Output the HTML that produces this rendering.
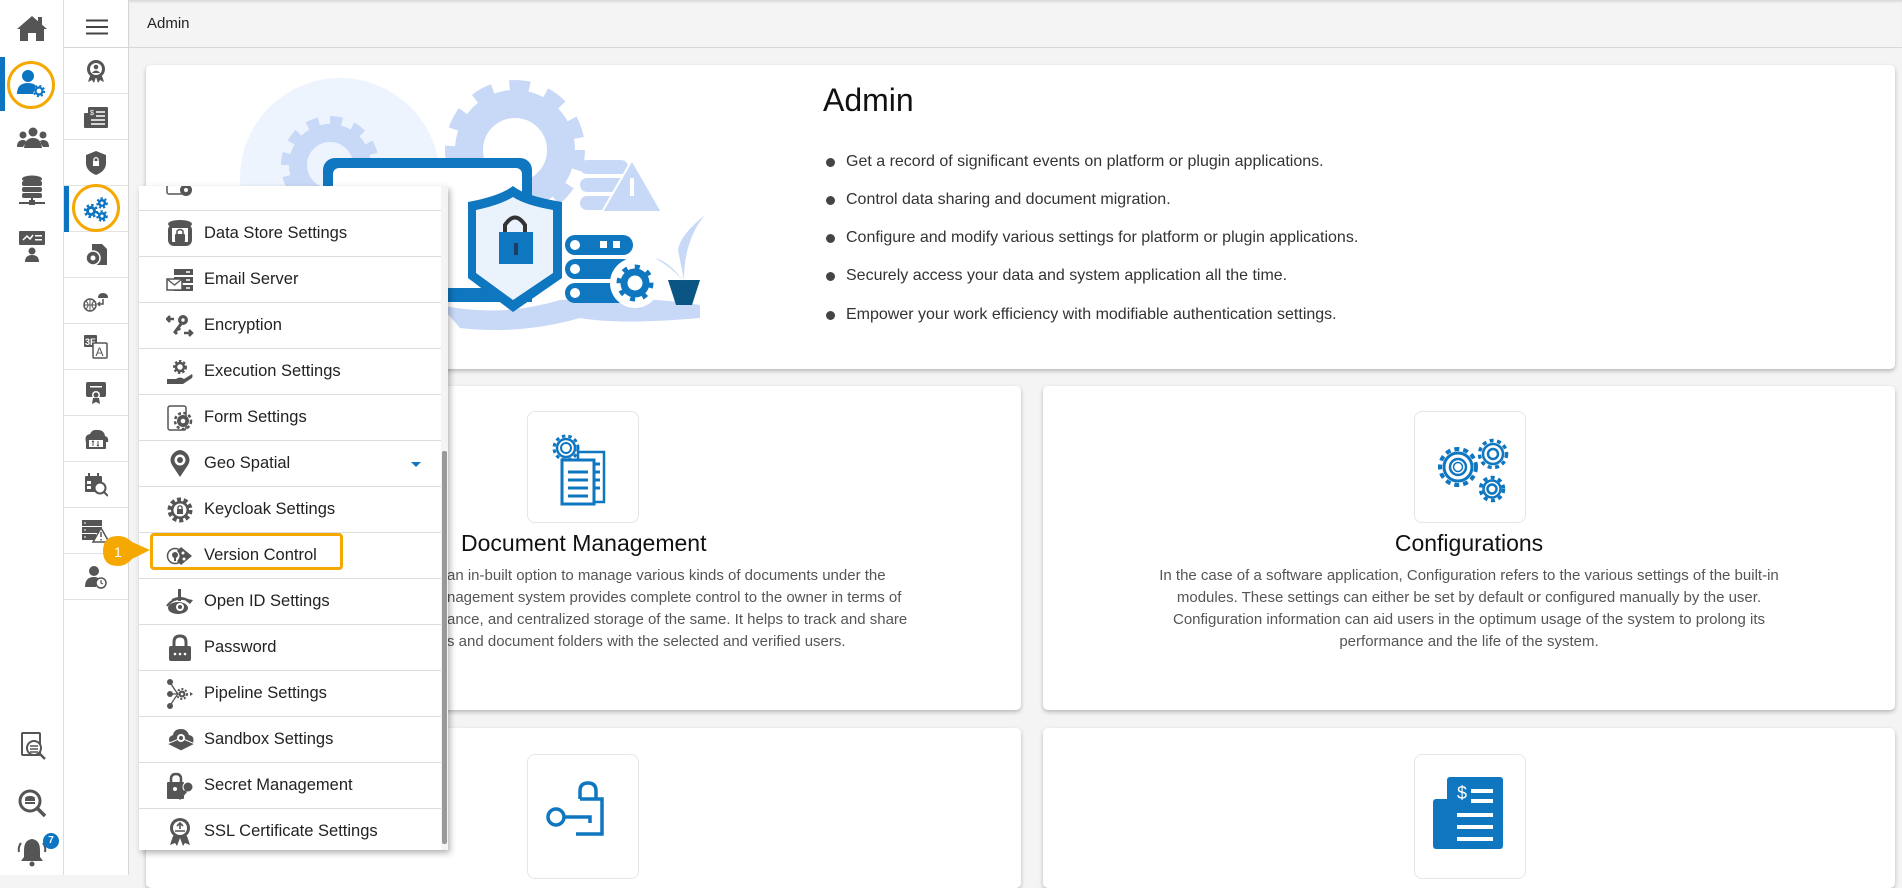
<!DOCTYPE html>
<html><head><meta charset="utf-8"><style>
*{box-sizing:border-box;margin:0;padding:0}
body{width:1902px;height:875px;overflow:hidden;background:#f4f4f4;font-family:"Liberation Sans",sans-serif;position:relative;color:#222}
.abs{position:absolute}
.sb1{left:0;top:0;width:64px;height:875px;background:#fff;border-right:1px solid #ddd}
.sb2{left:64px;top:0;width:65px;height:875px;background:#fff;border-right:1px solid #d6d6d6}
.hdr{left:129px;top:0;width:1773px;height:48px;background:#f4f4f4;border-bottom:1px solid #d8d8d8;box-shadow:0 3px 3px -2px #ccc inset}
.card{background:#fff;border-radius:5px;box-shadow:0 2px 4px rgba(0,0,0,.25)}
.s2i{position:absolute;left:64px;width:64px;height:46px;border-bottom:1px solid #e2e2e2;display:flex;align-items:center;justify-content:center}
.menu{left:139px;top:186px;width:309px;height:664px;background:#fff;box-shadow:2px 3px 6px rgba(0,0,0,.3);overflow:hidden}
.mi{position:absolute;left:0;width:302px;height:46px;border-bottom:1px solid #ddd;display:flex;align-items:center;font-size:16.5px;color:#222}
.mi svg{position:absolute;left:27px}
.mi span{position:absolute;left:65px}
.bul{position:absolute;left:826px;font-size:16px;color:#333}
.bul:before{content:"";position:absolute;left:0;top:5px;width:9px;height:9px;border-radius:50%;background:#444}
.bul span{margin-left:20px}
.ibox{position:absolute;width:112px;height:112px;border:1px solid #e6e6e6;border-radius:8px;background:#fff}
.desc{position:absolute;font-size:15px;color:#555;line-height:22px;text-align:center}
</style></head><body>
<div class="abs sb1"></div>
<div class="abs" style="left:0;top:57px;width:5px;height:54px;background:#0c74c0"></div>
<svg class="abs" style="left:16px;top:14px" width="32" height="28" viewBox="0 0 32 28"><path d="M16 2 L1 15 L4 15 L4 27 L12 27 L12 19 L20 19 L20 27 L28 27 L28 15 L31 15 Z" fill="#555"/><rect x="22" y="3" width="4" height="8" fill="#555"/></svg>
<div class="abs" style="left:7px;top:61px;width:48px;height:48px;border:3px solid #f5a800;border-radius:50%"></div>
<svg class="abs" style="left:16px;top:68px" width="30" height="30" viewBox="0 0 30 30"><circle cx="12" cy="8" r="6" fill="#0c74c0"/><path d="M1 26 Q1 15 12 15 Q18 15 20 18 L17 26 Z" fill="#0c74c0"/><circle cx="23" cy="23" r="3.5" fill="none" stroke="#0c74c0" stroke-width="2.2"/><circle cx="23" cy="23" r="5.3" fill="none" stroke="#0c74c0" stroke-width="1.8" stroke-dasharray="2 2.2"/></svg>
<svg class="abs" style="left:17px;top:127px" width="32" height="22" viewBox="0 0 32 22"><circle cx="16" cy="5" r="4.5" fill="#555"/><circle cx="6" cy="8" r="3.5" fill="#555"/><circle cx="26" cy="8" r="3.5" fill="#555"/><path d="M7 21 Q8 11 16 11 Q24 11 25 21Z M0 20 Q0 13 6 13 Q9 13 9 15 L6 20Z M32 20 Q32 13 26 13 Q23 13 23 15 L26 20Z" fill="#555"/></svg>
<svg class="abs" style="left:18px;top:175px" width="28" height="32" viewBox="0 0 28 32"><ellipse cx="14" cy="4" rx="10" ry="3.5" fill="#555"/><rect x="4" y="6" width="20" height="5" rx="2" fill="#555"/><rect x="4" y="12" width="20" height="5" rx="2" fill="#555"/><rect x="4" y="18" width="20" height="5" rx="2" fill="#555"/><rect x="13" y="23" width="2" height="5" fill="#555"/><rect x="1" y="27" width="26" height="2" fill="#555"/><rect x="11" y="25" width="6" height="5" fill="#555"/></svg>
<svg class="abs" style="left:19px;top:230px" width="26" height="32" viewBox="0 0 26 32"><rect x="0" y="1" width="26" height="14" rx="1" fill="#555"/><path d="M4 10 L8 6 L11 9 L14 5" stroke="#fff" stroke-width="1.5" fill="none"/><rect x="16" y="5" width="7" height="1.5" fill="#fff"/><rect x="16" y="9" width="7" height="1.5" fill="#fff"/><circle cx="13" cy="21" r="3.5" fill="#555"/><path d="M6 32 Q6 25 13 25 Q20 25 20 32Z" fill="#555"/></svg>
<svg class="abs" style="left:19px;top:732px" width="28" height="28" viewBox="0 0 28 28"><rect x="3" y="1" width="18" height="22" rx="1" fill="none" stroke="#555" stroke-width="2"/><circle cx="15" cy="16" r="7" fill="#fff" stroke="#555" stroke-width="2"/><path d="M11 14h8M11 17h8M11 20h8" stroke="#555" stroke-width="1.5"/><path d="M20 21 L26 27" stroke="#555" stroke-width="2.5"/></svg>
<svg class="abs" style="left:17px;top:788px" width="30" height="30" viewBox="0 0 30 30"><circle cx="13" cy="13" r="10" fill="none" stroke="#555" stroke-width="3"/><path d="M20 20 L28 28" stroke="#555" stroke-width="3.5"/><ellipse cx="13" cy="10" rx="5" ry="2" fill="#555"/><rect x="8" y="11" width="10" height="2" fill="#555"/><rect x="8" y="14" width="10" height="2" fill="#555"/></svg>
<svg class="abs" style="left:17px;top:837px" width="30" height="30" viewBox="0 0 30 30"><path d="M15 2 Q7 3 7 13 L7 20 L4 24 L26 24 L23 20 L23 13 Q23 3 15 2Z" fill="#555"/><circle cx="15" cy="27" r="2.5" fill="#555"/><path d="M4 6 Q1 10 2 15 M26 6 Q29 10 28 15" stroke="#555" stroke-width="2" fill="none"/></svg>
<div class="abs" style="left:43px;top:833px;width:16px;height:16px;border-radius:50%;background:#0c74c0;color:#fff;font-size:10px;font-weight:bold;text-align:center;line-height:16px">7</div>

<div class="abs sb2"></div>
<svg class="abs" style="left:86px;top:19px" width="22" height="16" viewBox="0 0 22 16"><path d="M0 1.5h22M0 8h22M0 14.5h22" stroke="#444" stroke-width="2"/></svg>
<div class="abs" style="left:64px;top:47px;width:64px;height:1px;background:#d6d6d6"></div>
<div class="s2i" style="top:48px"><svg width="22" height="24" viewBox="0 0 22 24"><circle cx="11" cy="10" r="9" fill="#555"/><circle cx="11" cy="10" r="6" fill="#fff"/><circle cx="11" cy="8" r="2.3" fill="#555"/><path d="M7 14 Q11 9 15 14Z" fill="#555"/><path d="M5 17 L3 23 L7 21 L9 24 L11 18Z M17 17 L19 23 L15 21 L13 24 L11 18Z" fill="#555"/></svg></div>
<div class="s2i" style="top:94px"><svg width="24" height="22" viewBox="0 0 24 22"><rect x="0" y="7" width="8" height="15" rx="1" fill="#555"/><rect x="4" y="1" width="20" height="21" rx="1" fill="#555"/><text x="6" y="9" font-size="7" fill="#fff" font-family="Liberation Sans">$</text><path d="M12 6h9M12 10h9M7 14h14M7 18h14" stroke="#fff" stroke-width="1.5"/></svg></div>
<div class="s2i" style="top:140px"><svg width="20" height="24" viewBox="0 0 20 24"><path d="M10 0 L20 4 L20 12 Q20 20 10 24 Q0 20 0 12 L0 4Z" fill="#555"/><rect x="7" y="10" width="6" height="5" fill="#fff"/><path d="M8 10 V8 Q10 5 12 8 V10" stroke="#fff" stroke-width="1.3" fill="none"/></svg></div>
<div class="s2i" style="top:186px"><svg width="26" height="26" viewBox="0 0 26 26"><circle cx="8" cy="15" r="3.5" fill="none" stroke="#0c74c0" stroke-width="3"/><circle cx="8" cy="15" r="6" fill="none" stroke="#0c74c0" stroke-width="2.2" stroke-dasharray="2.5 2.2"/><circle cx="19" cy="7" r="2.8" fill="none" stroke="#0c74c0" stroke-width="2.5"/><circle cx="19" cy="7" r="4.8" fill="none" stroke="#0c74c0" stroke-width="2" stroke-dasharray="2.2 2"/><circle cx="19" cy="20" r="2.8" fill="none" stroke="#0c74c0" stroke-width="2.5"/><circle cx="19" cy="20" r="4.8" fill="none" stroke="#0c74c0" stroke-width="2" stroke-dasharray="2.2 2"/></svg></div>
<div class="abs" style="left:64px;top:186px;width:5px;height:46px;background:#0c74c0"></div>
<div class="abs" style="left:72px;top:184px;width:48px;height:48px;border:3px solid #f5a800;border-radius:50%"></div>
<div class="s2i" style="top:232px"><svg width="24" height="24" viewBox="0 0 24 24"><path d="M8 1 H18 L23 6 V22 H8Z" fill="#555"/><circle cx="9" cy="15" r="7" fill="#555" stroke="#fff" stroke-width="1.5"/><circle cx="9" cy="15" r="2.5" fill="#fff"/></svg></div>
<div class="s2i" style="top:278px"><svg width="26" height="22" viewBox="0 0 26 22"><circle cx="7" cy="15" r="6" fill="none" stroke="#555" stroke-width="1.5"/><path d="M1 15h12M7 9v12M3 11 Q7 15 3 19M11 11 Q7 15 11 19" stroke="#555" stroke-width="1" fill="none"/><path d="M15 8 Q15 3 20 3 Q25 3 25 8Z" fill="#555"/><path d="M20 9 V14 H15 M17 12 L15 14 L17 16" stroke="#555" stroke-width="1.5" fill="none"/></svg></div>
<div class="s2i" style="top:324px"><svg width="26" height="26" viewBox="0 0 26 26"><rect x="1" y="1" width="13" height="12" rx="1" fill="#555"/><text x="2" y="11" font-size="9" fill="#fff" font-family="Liberation Sans" font-weight="bold">3F</text><rect x="10" y="9" width="14" height="15" rx="1" fill="#fff" stroke="#555" stroke-width="1.5"/><text x="12.5" y="22" font-size="12" fill="#555" font-family="Liberation Sans">A</text></svg></div>
<div class="s2i" style="top:370px"><svg width="22" height="24" viewBox="0 0 22 24"><rect x="1" y="1" width="20" height="15" rx="2" fill="#555"/><rect x="5" y="5" width="12" height="1.5" fill="#fff"/><circle cx="11" cy="14" r="4" fill="#fff"/><circle cx="11" cy="14" r="2.5" fill="#555"/><path d="M8 17 L7 23 L11 21 L15 23 L14 17" fill="#555"/></svg></div>
<div class="s2i" style="top:416px"><svg width="26" height="22" viewBox="0 0 26 22"><path d="M3 14 Q1 7 7 6 Q9 1 15 2 Q21 2 22 8 Q26 9 25 14Z" fill="#555"/><rect x="3" y="12" width="20" height="9" rx="1" fill="#555"/><rect x="6" y="12" width="14" height="7" fill="#fff"/><path d="M10 18v-5M9 14l1-1 1 1M15 13v5M14 17l1 1 1-1" stroke="#555" stroke-width="1"/></svg></div>
<div class="s2i" style="top:462px"><svg width="24" height="24" viewBox="0 0 24 24"><rect x="1" y="3" width="17" height="16" rx="1" fill="#555"/><rect x="4" y="0" width="2" height="5" fill="#555"/><rect x="13" y="0" width="2" height="5" fill="#555"/><rect x="3" y="8" width="4" height="3" fill="#fff"/><rect x="3" y="13" width="4" height="3" fill="#fff"/><circle cx="16" cy="15" r="5.5" fill="#fff" stroke="#555" stroke-width="2"/><path d="M20 19 L24 23" stroke="#555" stroke-width="2"/></svg></div>
<div class="s2i" style="top:508px"><svg width="28" height="24" viewBox="0 0 28 24"><rect x="0" y="1" width="20" height="6" fill="#555"/><rect x="0" y="8" width="20" height="6" fill="#555"/><rect x="0" y="15" width="14" height="6" fill="#555"/><path d="M2 4h2M2 11h2M2 18h2" stroke="#fff"/><path d="M19 9 L27 23 L11 23Z" fill="#fff" stroke="#555" stroke-width="1.5"/><path d="M19 13v5M19 20v1.5" stroke="#555" stroke-width="1.5"/></svg></div>
<div class="s2i" style="top:554px"><svg width="24" height="24" viewBox="0 0 24 24"><circle cx="10" cy="6" r="5" fill="#555"/><path d="M1 22 Q1 12 10 12 Q14 12 15 14 L12 22Z" fill="#555"/><circle cx="17" cy="18" r="5" fill="#fff" stroke="#555" stroke-width="1.5"/><path d="M17 15v3l2 1" stroke="#555" stroke-width="1.2" fill="none"/></svg></div>

<div class="abs hdr"></div>
<div class="abs" style="left:147px;top:15px;font-size:15px;color:#222">Admin</div>

<div class="abs card" style="left:146px;top:65px;width:1749px;height:304px"></div>
<svg class="abs" style="left:230px;top:75px" width="480" height="270" viewBox="230 75 480 270">
<circle cx="340" cy="178" r="100" fill="#eef4fe"/>
<circle cx="330" cy="165" r="32" fill="none" stroke="#c8d9f7" stroke-width="18"/>
<circle cx="330" cy="165" r="44" fill="none" stroke="#c8d9f7" stroke-width="10" stroke-dasharray="12 11"/>
<circle cx="515" cy="150" r="46" fill="none" stroke="#c8d9f7" stroke-width="28"/>
<circle cx="515" cy="150" r="64" fill="none" stroke="#c8d9f7" stroke-width="12" stroke-dasharray="20 17"/>
<path d="M440 305 Q500 318 560 300 Q640 295 700 305 L700 318 Q620 325 580 318 Q520 335 460 328Z" fill="#c8d9f7"/>
<rect x="580" y="160" width="48" height="14" rx="7" fill="#c8d9f7"/><rect x="580" y="178" width="48" height="14" rx="7" fill="#c8d9f7"/><rect x="580" y="196" width="48" height="14" rx="7" fill="#c8d9f7"/>
<path d="M632 160 L662 212 L602 212Z" fill="#c8d9f7" stroke="#fff" stroke-width="2"/><rect x="630" y="178" width="4" height="18" fill="#fff"/>
<rect x="323" y="158" width="209" height="142" rx="12" fill="#0f76c0"/>
<rect x="333" y="168" width="189" height="120" rx="6" fill="#fff"/>
<rect x="323" y="290" width="209" height="12" fill="#0f76c0"/>
<path d="M513 186 Q525 196 562 202 V278 L513 312 L468 278 V202 Q500 196 513 186Z" fill="#0f76c0"/>
<path d="M513 197 Q525 205 553 210 V273 L513 300 L476 273 V210 Q500 205 513 197Z" fill="#eaf3fc"/>
<path d="M505 233 V225 Q515 210 525 225 V233" stroke="#333" stroke-width="4" fill="none"/>
<rect x="499" y="232" width="34" height="32" fill="#0f76c0"/><rect x="514" y="243" width="4" height="12" fill="#1d3d66"/>
<rect x="565" y="235" width="68" height="20" rx="10" fill="#0f76c0"/><rect x="565" y="259" width="68" height="20" rx="10" fill="#0f76c0"/><rect x="565" y="283" width="68" height="20" rx="10" fill="#0f76c0"/>
<circle cx="575" cy="245" r="5" fill="#fff"/><circle cx="575" cy="269" r="5" fill="#fff"/><circle cx="575" cy="293" r="5" fill="#fff"/>
<rect x="600" y="241" width="7" height="7" fill="#fff"/><rect x="613" y="241" width="7" height="7" fill="#fff"/>
<circle cx="635" cy="283" r="25" fill="#fff"/>
<circle cx="635" cy="283" r="11" fill="none" stroke="#0f76c0" stroke-width="7"/>
<circle cx="635" cy="283" r="16" fill="none" stroke="#0f76c0" stroke-width="5" stroke-dasharray="5 7.5"/>
<path d="M668 280 H700 L692 305 H676Z" fill="#0b5585"/>
<path d="M684 280 Q684 240 705 215 Q680 235 678 250Z" fill="#c8d9f7"/>
<path d="M684 282 Q670 262 655 258 Q675 270 684 282Z" fill="#c8d9f7"/>
</svg>
<div class="abs" style="left:823px;top:82px;font-size:32px;color:#111">Admin</div>
<div class="bul" style="top:153px"><span>Get a record of significant events on platform or plugin applications.</span></div>
<div class="bul" style="top:191px"><span>Control data sharing and document migration.</span></div>
<div class="bul" style="top:229px"><span>Configure and modify various settings for platform or plugin applications.</span></div>
<div class="bul" style="top:267px"><span>Securely access your data and system application all the time.</span></div>
<div class="bul" style="top:306px"><span>Empower your work efficiency with modifiable authentication settings.</span></div>

<div class="abs card" style="left:146px;top:386px;width:875px;height:324px"></div>
<div class="abs card" style="left:1043px;top:386px;width:852px;height:324px"></div>
<div class="abs card" style="left:146px;top:728px;width:875px;height:160px"></div>
<div class="abs card" style="left:1043px;top:728px;width:852px;height:160px"></div>

<div class="ibox" style="left:527px;top:411px"><svg style="position:absolute;left:20px;top:18px" width="72" height="76" viewBox="0 0 72 76"><circle cx="18" cy="18" r="9" fill="none" stroke="#0f76c0" stroke-width="2.5"/><circle cx="18" cy="18" r="12" fill="none" stroke="#0f76c0" stroke-width="3" stroke-dasharray="3.5 3"/><circle cx="18" cy="18" r="5" fill="none" stroke="#0f76c0" stroke-width="2"/><rect x="30" y="22" width="26" height="50" fill="#fff" stroke="#0f76c0" stroke-width="2.5"/><rect x="14" y="30" width="32" height="44" fill="#fff" stroke="#0f76c0" stroke-width="3"/><path d="M20 42h20M20 50h20M20 58h20M20 66h20M46 34h6M46 42h6M46 50h6M46 58h6" stroke="#0f76c0" stroke-width="3"/></svg></div>
<div class="abs" style="left:461px;top:530px;font-size:23px;color:#111">Document Management</div>
<div class="desc" style="left:440px;top:565px;width:510px;text-align:left;padding-left:7px">an in-built option to manage various kinds of documents under the<br>nagement system provides complete control to the owner in terms of<br>ance, and centralized storage of the same. It helps to track and share<br>s and document folders with the selected and verified users.</div>

<div class="ibox" style="left:1414px;top:411px"><svg style="position:absolute;left:10px;top:18px" width="90" height="76" viewBox="0 0 90 76"><circle cx="33" cy="37" r="14" fill="none" stroke="#0f76c0" stroke-width="3"/><circle cx="33" cy="37" r="18" fill="none" stroke="#0f76c0" stroke-width="4" stroke-dasharray="5 4"/><circle cx="33" cy="37" r="8" fill="none" stroke="#0f76c0" stroke-width="2.5"/><circle cx="33" cy="37" r="4.5" fill="none" stroke="#0f76c0" stroke-width="1.5"/><circle cx="68" cy="24" r="10" fill="none" stroke="#0f76c0" stroke-width="2.5"/><circle cx="68" cy="24" r="13.5" fill="none" stroke="#0f76c0" stroke-width="3.5" stroke-dasharray="4 3.5"/><circle cx="68" cy="24" r="5" fill="none" stroke="#0f76c0" stroke-width="2.5"/><circle cx="67" cy="59" r="8.5" fill="none" stroke="#0f76c0" stroke-width="2.5"/><circle cx="67" cy="59" r="11.5" fill="none" stroke="#0f76c0" stroke-width="3.5" stroke-dasharray="4 3.5"/><circle cx="67" cy="59" r="4.5" fill="none" stroke="#0f76c0" stroke-width="2.5"/></svg></div>
<div class="abs" style="left:1043px;top:530px;width:852px;text-align:center;font-size:23px;color:#111">Configurations</div>
<div class="desc" style="left:1133px;top:565px;width:672px">In the case of a software application, Configuration refers to the various settings of the built-in<br>modules. These settings can either be set by default or configured manually by the user.<br>Configuration information can aid users in the optimum usage of the system to prolong its<br>performance and the life of the system.</div>

<div class="ibox" style="left:527px;top:754px;height:125px"><svg style="position:absolute;left:14px;top:26px" width="70" height="56" viewBox="0 0 70 56"><path d="M38 18 V10 Q38 2 46 2 Q54 2 54 10 V18" fill="none" stroke="#0f76c0" stroke-width="3.5"/><path d="M38 18 H60 V53 H34" fill="none" stroke="#0f76c0" stroke-width="3.5"/><circle cx="14" cy="36" r="8" fill="none" stroke="#0f76c0" stroke-width="3.5"/><path d="M22 36 H48 V42" stroke="#0f76c0" stroke-width="3.5" fill="none"/></svg></div>
<div class="ibox" style="left:1414px;top:754px;height:125px"><svg style="position:absolute;left:18px;top:22px" width="76" height="72" viewBox="0 0 76 72"><rect x="0" y="22" width="28" height="50" rx="3" fill="#0f76c0"/><rect x="14" y="0" width="56" height="72" rx="3" fill="#0f76c0"/><text x="24" y="22" font-size="18" fill="#fff" font-family="Liberation Sans">$</text><path d="M38 14h22M38 24h22M24 38h36M24 50h36M24 62h36" stroke="#fff" stroke-width="4"/></svg></div>

<div class="abs menu">
<div class="mi" style="top:-21px"><svg width="28" height="20" viewBox="0 0 28 20"><rect x="1" y="2" width="16" height="14" rx="2" fill="none" stroke="#555" stroke-width="1.5"/><circle cx="20" cy="12" r="6" fill="#555"/><circle cx="20" cy="12" r="2" fill="#fff"/></svg></div>
<div class="mi" style="top:25px"><svg width="28" height="30" viewBox="0 0 28 30"><ellipse cx="14" cy="5" rx="12" ry="4" fill="#555"/><rect x="2" y="5" width="24" height="22" rx="6" fill="#555"/><rect x="6" y="9" width="16" height="14" fill="#fff"/><rect x="9" y="15" width="10" height="8" rx="1" fill="#555"/><path d="M11 15 V12 Q14 9 17 12 V15" stroke="#555" stroke-width="1.5" fill="none"/></svg><span>Data Store Settings</span></div>
<div class="mi" style="top:71px"><svg width="28" height="22" viewBox="0 0 28 22"><rect x="8" y="0" width="19" height="6" fill="#555"/><rect x="8" y="8" width="19" height="6" fill="#555"/><rect x="8" y="16" width="19" height="6" fill="#555"/><rect x="1" y="10" width="15" height="11" fill="#fff" stroke="#555" stroke-width="1.5"/><path d="M1 10 L8.5 16 L16 10" stroke="#555" stroke-width="1.3" fill="none"/><path d="M20 3h4M20 11h4M20 19h4" stroke="#fff" stroke-width="1.5"/></svg><span>Email Server</span></div>
<div class="mi" style="top:117px"><svg width="28" height="24" viewBox="0 0 28 24"><circle cx="17" cy="6" r="5" fill="#555"/><circle cx="17" cy="6" r="1.7" fill="#fff"/><path d="M15 10 L9 18 L11 20 M12 14 L14 16" stroke="#555" stroke-width="3" fill="none"/><path d="M1 5 H8 M4 2 L1 5 L4 8" stroke="#555" stroke-width="2.5" fill="none"/><path d="M18 19 H26 M23 16 L26 19 L23 22" stroke="#555" stroke-width="2.5" fill="none"/></svg><span>Encryption</span></div>
<div class="mi" style="top:163px"><svg width="28" height="26" viewBox="0 0 28 26"><circle cx="14" cy="8" r="4" fill="none" stroke="#555" stroke-width="2.5"/><circle cx="14" cy="8" r="6" fill="none" stroke="#555" stroke-width="2" stroke-dasharray="2.5 2"/><path d="M1 20 H10 Q14 17 18 20 L26 15 Q27 17 26 19 L17 25 H1Z" fill="#555"/></svg><span>Execution Settings</span></div>
<div class="mi" style="top:209px"><svg width="28" height="26" viewBox="0 0 28 26"><rect x="2" y="1" width="18" height="24" rx="2" fill="none" stroke="#555" stroke-width="1.5"/><circle cx="17" cy="16" r="6" fill="#555"/><circle cx="17" cy="16" r="8" fill="none" stroke="#555" stroke-width="2.5" stroke-dasharray="3 2.4"/><circle cx="17" cy="16" r="2.3" fill="#fff"/></svg><span>Form Settings</span></div>
<div class="mi" style="top:255px"><svg width="28" height="28" viewBox="0 0 28 28"><path d="M14 27 L6 15 Q3 10 6 5 Q10 0 14 0 Q18 0 22 5 Q25 10 22 15Z" fill="#555"/><circle cx="14" cy="10" r="5.5" fill="#fff"/><circle cx="14" cy="10" r="3" fill="#555"/></svg><span>Geo Spatial</span><div style="position:absolute;left:272px;top:21px;border-left:5px solid transparent;border-right:5px solid transparent;border-top:5px solid #0f76c0"></div></div>
<div class="mi" style="top:301px"><svg width="28" height="28" viewBox="0 0 28 28"><circle cx="14" cy="14" r="10.5" fill="none" stroke="#555" stroke-width="4" stroke-dasharray="4 2.6"/><circle cx="14" cy="14" r="9" fill="#555"/><circle cx="14" cy="14" r="6.5" fill="#fff"/><rect x="11" y="13" width="6" height="5" fill="#555"/><path d="M12 13 V11 Q14 8.5 16 11 V13" stroke="#555" stroke-width="1.3" fill="none"/></svg><span>Keycloak Settings</span></div>
<div class="mi" style="top:347px"><svg width="28" height="24" viewBox="0 0 28 24"><circle cx="9" cy="12" r="7.5" fill="#fff" stroke="#555" stroke-width="1.5"/><circle cx="9" cy="11" r="3" fill="#555"/><rect x="8" y="12" width="2" height="5" fill="#555"/><path d="M15 3 L26 12 L15 21 L11 17 Q16 12 11 7Z" fill="#555"/><circle cx="17" cy="9" r="1.5" fill="#fff"/><circle cx="18" cy="15" r="1.5" fill="#fff"/></svg><span>Version Control</span></div>
<div class="mi" style="top:393px"><svg width="28" height="28" viewBox="0 0 28 28"><path d="M1 18 Q8 8 22 12 Q14 8 6 12" stroke="#555" stroke-width="2" fill="none"/><ellipse cx="12" cy="20" rx="10" ry="6" fill="#555"/><circle cx="14" cy="19" r="4" fill="#fff"/><circle cx="14" cy="19" r="2" fill="#555"/><rect x="12" y="1" width="3" height="12" fill="#555"/><path d="M16 10 L27 12 L24 16Z" fill="#555"/></svg><span>Open ID Settings</span></div>
<div class="mi" style="top:439px"><svg width="28" height="28" viewBox="0 0 28 28"><path d="M8 13 V8 Q8 2 14 2 Q20 2 20 8 V13" stroke="#555" stroke-width="3" fill="none"/><rect x="3" y="12" width="22" height="15" rx="2" fill="#555"/><circle cx="9" cy="20" r="1.3" fill="#fff"/><circle cx="14" cy="20" r="1.3" fill="#fff"/><circle cx="19" cy="20" r="1.3" fill="#fff"/></svg><span>Password</span></div>
<div class="mi" style="top:485px"><svg width="28" height="30" viewBox="0 0 28 30"><circle cx="4" cy="3" r="3" fill="#555"/><circle cx="4" cy="15" r="3" fill="#555"/><circle cx="4" cy="27" r="3" fill="#555"/><path d="M4 3 Q8 10 12 15 Q8 20 4 27 M4 15 H10" stroke="#555" stroke-width="1.3" fill="none"/><circle cx="16" cy="15" r="3.5" fill="#555"/><circle cx="16" cy="15" r="5" fill="none" stroke="#555" stroke-width="2" stroke-dasharray="2 1.8"/><circle cx="16" cy="15" r="1.3" fill="#fff"/><path d="M24 13 L27 15 L24 17" fill="#555"/></svg><span>Pipeline Settings</span></div>
<div class="mi" style="top:531px"><svg width="30" height="26" viewBox="0 0 30 26"><path d="M4 16 Q1 10 7 8 Q8 2 15 2 Q21 2 23 8 Q29 9 27 16Z" fill="#555"/><path d="M1 17 L15 11 L29 17 L15 24Z" fill="#555" stroke="#fff" stroke-width="1"/><circle cx="15" cy="11" r="4" fill="#fff"/><circle cx="15" cy="11" r="2" fill="#555"/></svg><span>Sandbox Settings</span></div>
<div class="mi" style="top:577px"><svg width="28" height="28" viewBox="0 0 28 28"><path d="M5 11 V7 Q5 2 10 2 Q15 2 15 7 V11" stroke="#555" stroke-width="2.5" fill="none"/><rect x="1" y="10" width="17" height="17" rx="1" fill="#555"/><circle cx="9" cy="17" r="2" fill="#fff"/><circle cx="22" cy="15" r="5" fill="#555" stroke="#fff" stroke-width="1"/><path d="M20 19 L13 27" stroke="#555" stroke-width="3"/></svg><span>Secret Management</span></div>
<div class="mi" style="top:623px"><svg width="28" height="30" viewBox="0 0 28 30"><circle cx="14" cy="11" r="10" fill="#555"/><circle cx="14" cy="11" r="7" fill="#fff"/><path d="M9 14h10M14 6v6M11 9l3-3 3 3" stroke="#555" stroke-width="1.6" fill="none"/><path d="M7 19 L4 28 L9 26 L11 29 L14 21 L17 29 L19 26 L24 28 L21 19Z" fill="#555"/></svg><span>SSL Certificate Settings</span></div>
<div style="position:absolute;left:302px;top:0;width:7px;height:664px;background:#f4f4f4"></div>
<div style="position:absolute;left:303px;top:265px;width:5px;height:393px;background:#999;border-radius:2px"></div>
</div>
<div class="abs" style="left:150px;top:533px;width:193px;height:37px;border:3px solid #f5a800;border-radius:4px"></div>
<svg class="abs" style="left:102px;top:535px" width="50" height="32" viewBox="0 0 50 32"><path d="M16 1 Q24 1 30 7 L48 15 L30 24 Q24 31 16 31 Q1 31 1 16 Q1 1 16 1Z" fill="#f5a800"/><text x="12" y="22" font-size="14" fill="#fff" font-family="Liberation Sans">1</text></svg>
</body></html>
